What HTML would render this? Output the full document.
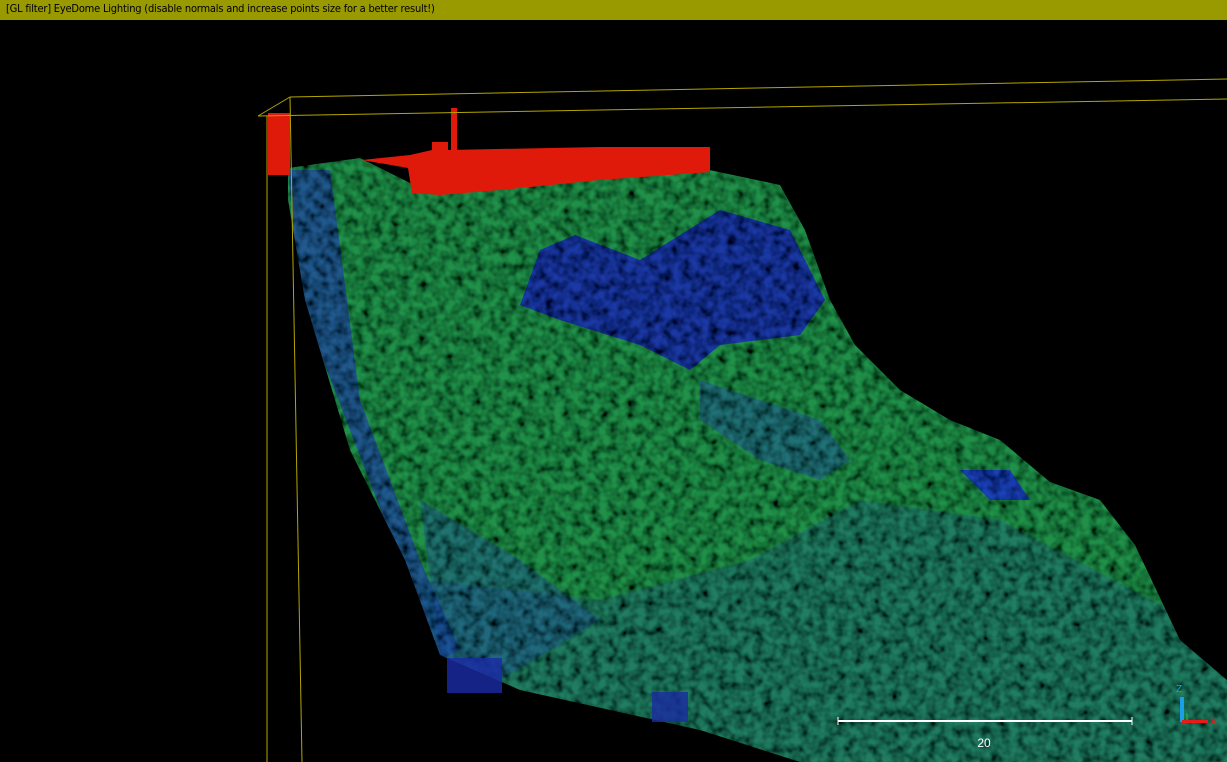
<!DOCTYPE html>
<html><head><meta charset="utf-8"><style>
html,body{margin:0;padding:0;background:#000;width:1227px;height:762px;overflow:hidden}
.bar{position:absolute;left:0;top:0;width:1227px;height:20px;background:#999900;color:#000;font:11px "DejaVu Sans Condensed","Liberation Sans",sans-serif;line-height:18px;padding-left:6px;box-sizing:border-box;letter-spacing:-0.2px}
svg{position:absolute;left:0;top:0}
</style></head><body>
<svg width="1227" height="762" viewBox="0 0 1227 762">
<defs>
<filter id="n" x="0" y="0" width="100%" height="100%">
<feTurbulence type="fractalNoise" baseFrequency="0.11" numOctaves="2" seed="3" result="t"/>
<feColorMatrix in="t" type="matrix" values="0 0 0 0 0  0 0 0 0 0  0 0 0 0 0  0 0 0 -1.8 1.25" result="d"/>
<feComposite in="d" in2="SourceGraphic" operator="in" result="dd"/>
<feMerge><feMergeNode in="SourceGraphic"/><feMergeNode in="dd"/></feMerge>
</filter>
<clipPath id="c"><polygon points="288,168 360,158 420,188 500,182 600,175 700,168 780,185 805,230 830,300 855,345 900,390 950,420 1000,440 1050,482 1100,500 1135,545 1180,640 1227,680 1227,762 800,762 700,730 520,690 440,655 405,560 350,450 305,300 288,200"/></clipPath>
</defs>
<g filter="url(#n)" clip-path="url(#c)">
<rect x="280" y="150" width="950" height="620" fill="#23904a"/>
<polygon points="288,170 330,170 360,400 420,560 460,650 440,660 400,560 300,300" fill="#2040a8" opacity="0.7"/>
<polygon points="540,250 575,235 640,260 720,210 790,230 825,300 800,335 720,345 690,370 640,345 560,320 520,305" fill="#1820b8" opacity="0.8"/>
<polygon points="700,380 760,400 820,420 850,460 820,480 760,460 700,420" fill="#2050a0" opacity="0.5"/>
<polygon points="960,470 1010,470 1030,500 990,500" fill="#1a2ad0" opacity="0.8"/>
<polygon points="860,500 1000,520 1227,640 1227,762 800,762 700,730 520,690 440,655 420,580 600,600 750,560" fill="#1e5a8a" opacity="0.35"/>
<polygon points="420,500 520,560 600,620 500,680 440,655" fill="#2048a8" opacity="0.4"/>
</g>
<rect x="447" y="658" width="55" height="35" fill="#1a2aa8" opacity="0.8"/>
<rect x="652" y="692" width="36" height="30" fill="#1a2aa0" opacity="0.8"/>
<rect x="268" y="113" width="22" height="62" fill="#e01a0a"/>
<polygon points="362,160 410,155 432,150 432,142 448,142 448,150 600,147 710,147 710,172 600,180 500,190 440,195 412,193 408,168" fill="#e01a0a"/>
<rect x="451" y="108" width="6" height="45" fill="#e01a0a"/>
<g stroke="#b3a600" stroke-width="1" fill="none">
<line x1="290" y1="97" x2="1227" y2="79"/>
<line x1="258" y1="116" x2="1227" y2="99"/>
<line x1="258" y1="116" x2="290" y2="97"/>
<line x1="267" y1="116" x2="267" y2="762"/>
<line x1="290" y1="97" x2="302" y2="762"/>
</g>
<line x1="838" y1="721" x2="1132" y2="721" stroke="#fff" stroke-width="2"/>
<line x1="838" y1="717" x2="838" y2="725" stroke="#fff"/>
<line x1="1132" y1="717" x2="1132" y2="725" stroke="#fff"/>
<text x="984" y="747" fill="#fff" font-family="Liberation Sans,sans-serif" font-size="12" text-anchor="middle">20</text>
<rect x="1180" y="697" width="4" height="25" fill="#1aa0e8"/>
<rect x="1182" y="720" width="26" height="3" fill="#e81a1a"/>
<line x1="1187" y1="720" x2="1187" y2="713" stroke="#1ad01a"/>
<text x="1176" y="692" fill="#1aa0e8" font-family="Liberation Sans,sans-serif" font-size="10">Z</text>
<text x="1210" y="725" fill="#e81a1a" font-family="Liberation Sans,sans-serif" font-size="10">X</text>
</svg>
<div class="bar">[GL filter] EyeDome Lighting (disable normals and increase points size for a better result!)</div>
</body></html>
